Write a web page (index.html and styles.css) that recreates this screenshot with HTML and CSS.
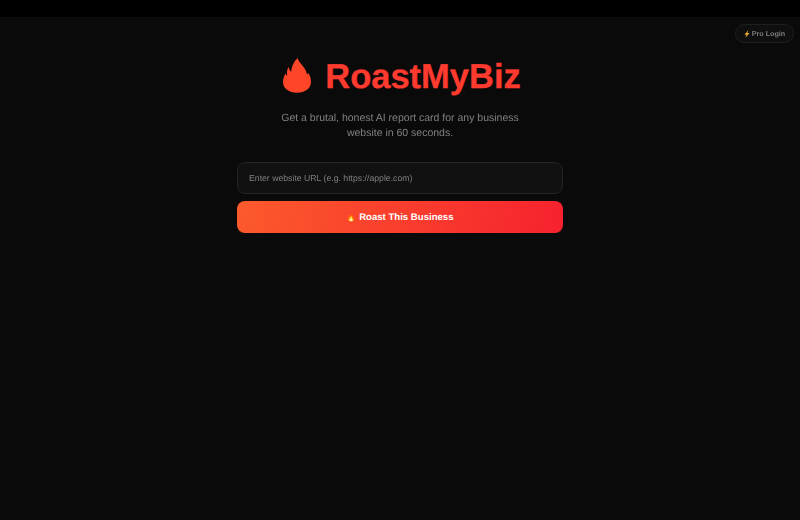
FILE: index.html
```html
<!DOCTYPE html>
<html lang="en">
<head>
<meta charset="utf-8">
<title>RoastMyBiz</title>
<link rel="stylesheet" href="styles.css">
</head>
<body>
<div class="topbar"></div>
<main class="page">
  <a class="pro" href="#"><svg class="bolt" viewBox="0 0 10 14"><path d="M7.500 0 .5 8.200h3.600L2 14l7.500-8.600H5.700z"/></svg>Pro Login</a>
  <section class="hero">
    <h1 class="title"><svg class="flame" viewBox="0 0 28 35"><path d="M14.700 0C15.500 4.500 21 8 23 13 23.500 14.500 23.800 15.500 24 16.500 24.600 16 25 15.500 25.300 15 27 17.500 28 21 28 24 28 30.500 22 34.700 14 34.700 6 34.700 0 30.500 0 24 0 21 1 18 2.500 15.500 3 16.500 3.500 17.500 4.200 18 3.700 14.500 4 11.500 5.500 8.700 6 11 7 13 8.200 13.700 8.500 9 10.500 3.500 14.700 0z"/></svg><span class="name">RoastMyBiz</span></h1>
    <p class="sub">Get a brutal, honest AI report card for any business website in 60 seconds.</p>
    <form class="form">
      <input class="url" type="text" placeholder="Enter website URL (e.g. https://apple.com)">
      <button class="go" type="button"><span class="fire">🔥</span> Roast This Business</button>
    </form>
  </section>
</main>
</body>
</html>
```

FILE: styles.css
```css
* { box-sizing: border-box; }
html, body { margin: 0; height: 100%; }
body {
  background: #0a0a0a;
  font-family: "Liberation Sans", Arial, sans-serif;
  text-rendering: geometricPrecision;
  display: flex;
  flex-direction: column;
  overflow: hidden;
}
.topbar { height: 17px; background: #000; flex: none; }
.page { position: relative; flex: 1; }
.pro {
  position: absolute;
  top: 7px;
  right: 6px;
  height: 19px;
  width: 59px;
  display: flex;
  align-items: center;
  justify-content: center;
  gap: 2px;
  border: 1px solid #1f1f1f;
  border-radius: 10px;
  background: #0f0f0f;
  color: #7c7c7c;
  font-size: 7.200px;
  font-weight: 700;
  text-decoration: none;
  will-change: transform;
}
.bolt { width: 6px; height: 8px; fill: #e8a830; }
.hero {
  width: 326px;
  margin: 0 auto;
  padding-top: 41px;
  display: flex;
  flex-direction: column;
  align-items: center;
}
.title {
  margin: 0;
  padding-left: 4px;
  display: flex;
  align-items: center;
  gap: 14px;
  height: 35px;
  font-size: 34.500px;
  font-weight: 700;
  line-height: 35px;
  color: #ff3b30;
}
.name { padding-top: 4px; -webkit-text-stroke: .3px #ff3b30; }
.flame { width: 28px; height: 35px; fill: #ff4528; }
.sub {
  width: 250px;
  margin: 17.500px 0 0;
  color: #808080;
  font-size: 10.500px;
  line-height: 15px;
  text-align: center;
  will-change: transform;
}
.form { width: 100%; margin-top: 21px; display: flex; flex-direction: column; gap: 7px; }
.url {
  height: 32px;
  padding: 0 11px;
  border: 1px solid #242424;
  border-radius: 8px;
  background: #111;
  color: #ddd;
  font: 8.700px "Liberation Sans", Arial, sans-serif;
  text-rendering: geometricPrecision;
  outline: none;
  will-change: transform;
}
.url::placeholder { color: #808080; opacity: 1; }
.go {
  height: 32px;
  padding: 2px 0 0;
  border: 0;
  border-radius: 8px;
  background: linear-gradient(100deg, #fc5a2c, #f6222e);
  color: #fff;
  font: 700 9.600px "Liberation Sans", Arial, sans-serif;
  text-rendering: geometricPrecision;
}
.fire { font-size: 8px; }
```
